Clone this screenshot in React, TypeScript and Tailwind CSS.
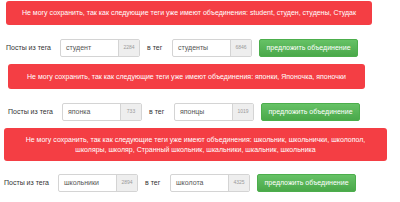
import type { FC } from 'react';

type Block = {
  offset: string;
  alertWidth: string;
  alertHeight: string;
  lines: string[];
  from: string;
  fromCount: string;
  to: string;
  toCount: string;
  rowTop: string;
  blockTop: string;
};

const blocks: Block[] = [
  {
    offset: 'pl-[6px]',
    alertWidth: 'w-[366px]',
    alertHeight: 'h-[24px]',
    lines: ['Не могу сохранить, так как следующие теги уже имеют объединения: student, студен, студены, Студак'],
    from: 'студент',
    fromCount: '2284',
    to: 'студенты',
    toCount: '6846',
    rowTop: 'mt-[14px]',
    blockTop: 'mt-[1px]',
  },
  {
    offset: 'pl-[8px]',
    alertWidth: 'w-[357px]',
    alertHeight: 'h-[25px]',
    lines: ['Не могу сохранить, так как следующие теги уже имеют объединения: японки, Японочка, японочки'],
    from: 'японка',
    fromCount: '733',
    to: 'японцы',
    toCount: '1019',
    rowTop: 'mt-[14px]',
    blockTop: 'mt-[7px]',
  },
  {
    offset: 'pl-[4px]',
    alertWidth: 'w-[383px]',
    alertHeight: 'h-[33px]',
    lines: [
      'Не могу сохранить, так как следующие теги уже имеют объединения: школьник, школьнички, школопол,',
      'школяры, школяр, Странный школьник, шкальники, шкальник, школьника',
    ],
    from: 'школьники',
    fromCount: '2894',
    to: 'школота',
    toCount: '4325',
    rowTop: 'mt-[13px]',
    blockTop: 'mt-[7px]',
  },
];

const TagInput: FC<{ value: string; count: string }> = ({ value, count }) => (
  <div className="flex h-[18px] w-[80px] overflow-hidden rounded-[2px] border border-[#d4d4d4] bg-white">
    <div className="flex w-[57px] items-center px-[5px] text-[7px] text-[#555]">{value}</div>
    <div className="flex flex-1 items-center justify-center border-l border-[#d4d4d4] bg-[#eeeeee] text-[5px] text-[#9a9a9a]">
      {count}
    </div>
  </div>
);

export default function App() {
  return (
    <div className="h-[202px] w-[400px] overflow-hidden bg-white font-['Liberation_Sans',Arial,sans-serif]">
      {blocks.map((b) => (
        <div key={b.from} className={`${b.offset} ${b.blockTop}`}>
          <div
            className={`${b.alertWidth} ${b.alertHeight} flex flex-col items-center justify-center rounded-[3px] bg-[#f43e44] text-center text-[7px] leading-[10px] text-white`}
          >
            {b.lines.map((l) => (
              <span key={l} className="whitespace-nowrap">
                {l}
              </span>
            ))}
          </div>
          <div className={`${b.rowTop} flex items-center text-[7px] text-[#333]`}>
            <span className="w-[54px]">Посты из тега</span>
            <TagInput value={b.from} count={b.fromCount} />
            <span className="ml-[7px] w-[25px]">в тег</span>
            <TagInput value={b.to} count={b.toCount} />
            <button className="ml-[7px] h-[18px] w-[99px] rounded-[2px] border border-[#4cae4c] bg-gradient-to-b from-[#66c266] to-[#4aa84a] text-[7px] text-white">
              предложить объединение
            </button>
          </div>
        </div>
      ))}
    </div>
  );
}
